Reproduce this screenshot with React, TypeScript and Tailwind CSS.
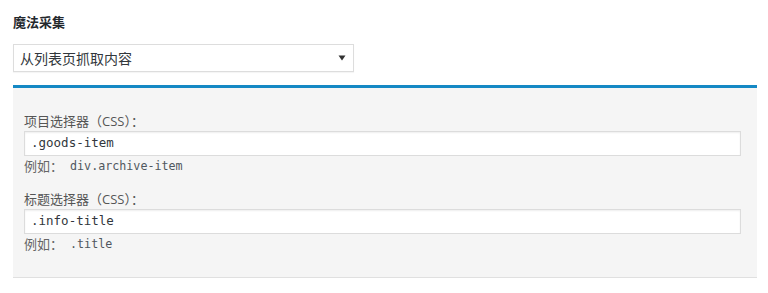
import React from "react";

const sans = { fontFamily: '"Open Sans", "Noto Sans CJK SC", sans-serif' };

function Field({ label, value, example }: { label: string; value: string; example: string }) {
  return (
    <div className="flex flex-col">
      <div className="text-[13px] leading-[20px] text-[#555]">{label}</div>
      <div className="h-[25px] border border-[#dcdcdc] bg-white shadow-[inset_0_1px_2px_rgba(0,0,0,0.07)] flex items-center pl-[6px] font-['DejaVu_Sans_Mono',monospace] text-[12.5px] text-[#32373c]">
        {value}
      </div>
      <div className="flex items-center text-[13px] leading-[20px] text-[#666]">
        <span>例如：</span>
        <span className="ml-[7px] font-['DejaVu_Sans_Mono',monospace] text-[11.7px] text-[#50575e]">{example}</span>
      </div>
    </div>
  );
}

export default function App() {
  return (
    <div className="w-[768px] h-[293px] bg-white pl-[13px] pr-[11px] overflow-hidden" style={sans}>
      <div className="pt-[13px] text-[13px] leading-[18px] font-bold text-[#23282d]">魔法采集</div>
      <div className="mt-[13px] w-[341px] h-[28px] border border-[#dddddd] bg-white flex items-center justify-between pl-[6px] pr-[7px] text-[14px] text-[#32373c] shadow-[0_1px_1px_rgba(0,0,0,0.04)]">
        <span>从列表页抓取内容</span>
        <svg width="8" height="6" viewBox="0 0 8 6">
          <path d="M0.5 0.5 L7.5 0.5 L4 5.5 Z" fill="#333" />
        </svg>
      </div>
      <div className="mt-[13px] border-t-[3px] border-t-[#1488c4] border-b border-b-[#e0e0e0] bg-[#f5f5f5] pl-[11px] pr-[16px] pt-[23px] pb-[23px] flex flex-col gap-[13px]">
        <Field label="项目选择器（CSS）：" value=".goods-item" example="div.archive-item" />
        <Field label="标题选择器（CSS）：" value=".info-title" example=".title" />
      </div>
    </div>
  );
}
